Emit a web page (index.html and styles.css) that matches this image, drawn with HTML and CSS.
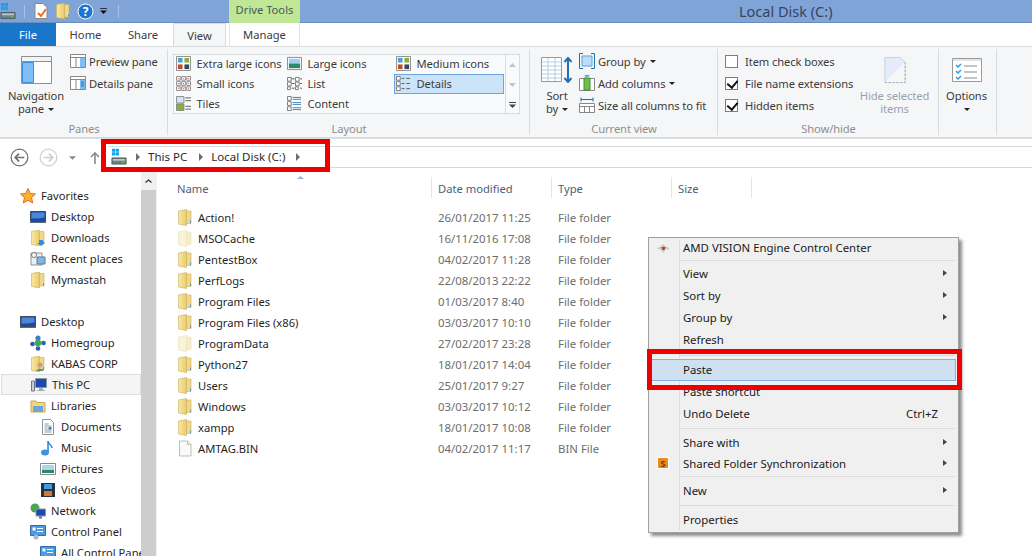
FILE: index.html
```html
<!DOCTYPE html>
<html lang="en">
<head>
<meta charset="utf-8">
<title>Local Disk (C:)</title>
<link rel="stylesheet" href="styles.css">
</head>
<body>
<svg class="defs" width="0" height="0">
  <defs>
    <linearGradient id="fg" x1="0" x2="1" y1="0" y2="0"><stop offset="0" stop-color="#f8e9a4"/><stop offset="1" stop-color="#e8cb6e"/></linearGradient>
    <symbol id="folder" viewBox="0 0 16 16">
      <path d="M1.500 1.500 9.500 0v16l-8-1.500z" fill="url(#fg)" stroke="#c9ad5c" stroke-width=".6"/>
      <path d="M9.500 1.500h4.500v12.500H9.500z" fill="#f0d888" stroke="#c9ad5c" stroke-width=".6"/>
      <path d="M13 11h1v2.500h-1z" fill="#4d9ad8"/>
    </symbol>
    <symbol id="folderlight" viewBox="0 0 16 16">
      <path d="M1.500 1.500 9.500 0v16l-8-1.500z" fill="#f9f3d8" stroke="#e8dfbc" stroke-width=".6"/>
      <path d="M9.500 1.500h4.500v12.500H9.500z" fill="#f5edcc" stroke="#e8dfbc" stroke-width=".6"/>
    </symbol>
    <symbol id="file" viewBox="0 0 16 16">
      <path d="M2.500.5h8l3.500 3.500v11.500H2.500z" fill="#fafafa" stroke="#bdbdbd"/>
      <path d="M10.500.5v3.500H14" fill="#eee" stroke="#bdbdbd"/>
    </symbol>
    <symbol id="monitor" viewBox="0 0 16 16">
      <path d="M.5 2.500h15v10H.5z" fill="#1c4aa3" stroke="#3d4b5e"/>
      <path d="M1.500 3.500h13v5c-5 1-9 1-13 1z" fill="#4d86d6"/>
      <path d="M0 13h16v1H0z" fill="#5b6b7d"/>
    </symbol>
    <symbol id="disk" viewBox="0 0 17 18">
      <path d="M1 0h3.500v3.500H1zM5 0h3.500v3.500H5zM1 4h3.500v3.500H1zM5 4h3.500v3.500H5z" fill="#10a5ea"/>
      <path d="M1 10h15v6.500H1z" fill="#6f7f86" stroke="#4a5a60"/>
      <path d="M2 11h13v2H2z" fill="#b9c6cb"/>
      <path d="M11.500 14h3v1.500h-3z" fill="#5ac04a"/>
    </symbol>
    <symbol id="cp" viewBox="0 0 16 16">
      <path d="M.5 1.500h15v10H.5z" fill="#4a9be0" stroke="#2d6da8"/>
      <path d="M2.500 3.500h3v3h-3z" fill="#fff"/>
      <path d="M7 4h6v1H7zM7 7h6v1H7z" fill="#fff"/>
      <circle cx="6" cy="13" r="2.500" fill="#b0b8bf"/>
    </symbol>
    <symbol id="thumbs" viewBox="0 0 16 16">
      <path d="M.5.500h15v15H.5z" fill="#fff" stroke="#8a8a8a"/>
      <path d="M2 2h5v5H2z" fill="#4f9fd0"/><path d="M9 2h5v5H9z" fill="#8cae3c"/>
      <path d="M2 9h5v5H2z" fill="#c8492a"/><path d="M9 9h5v5H9z" fill="#34495e"/>
    </symbol>
  </defs>
</svg>

<header class="titlebar">
  <div class="qat">
    <svg class="qi q1" viewBox="0 0 17 18"><use href="#disk"/></svg>
    <i class="qsep"></i>
    <svg class="qi q2" viewBox="0 0 14 16"><path d="M1 .5h8l4 4v11H1z" fill="#fff" stroke="#888"/><path d="m4 10 3 3 5-7" fill="none" stroke="#e2702a" stroke-width="2"/></svg>
    <svg class="qi q3" viewBox="0 0 16 16"><use href="#folder"/></svg>
    <svg class="qi q4" viewBox="0 0 17 17"><circle cx="8.500" cy="8.500" r="7.500" fill="#1a76d2" stroke="#fff"/><text x="8.500" y="13" class="qmark">?</text></svg>
    <svg class="qi q5" viewBox="0 0 8 7"><path d="M0 0h8v1H0zM0 3h8L4 7z" fill="#111"/></svg>
    <i class="qsep q6"></i>
  </div>
  <div class="ctx-tab">Drive Tools</div>
  <div class="wintitle">Local Disk (C:)</div>
</header>

<nav class="tabs">
  <span class="tab file">File</span>
  <span class="tab home">Home</span>
  <span class="tab share">Share</span>
  <span class="tab view">View</span>
  <span class="tab manage">Manage</span>
</nav>

<section class="ribbon">
  <div class="group g-panes">
    <div class="gbody panes">
      <div class="bigbtn nav">
        <svg class="bigicon" viewBox="0 0 31 28"><path d="M.5.500h30v27H.500z" fill="#fff" stroke="#8f8f8f"/><path d="M1 1h29v4H1z" fill="#f4f4f4"/><path d="M.5 5.500h30" stroke="#8f8f8f"/><path d="M1.500 6.500h11v20h-11z" fill="#7fbdf5" stroke="#3f8fdc"/></svg>
        <span class="biglabel">Navigation<br>pane <b class="caret"></b></span>
      </div>
      <div class="smallcol">
        <div class="sitem"><svg class="si" viewBox="0 0 16 16"><path d="M.5 1.500h15v13H.5z" fill="#fff" stroke="#888"/><path d="M.5 4.500h15M6 4.500v10" stroke="#888" fill="none"/><path d="M10 5h5v9h-5z" fill="#7fbdf5"/></svg>Preview pane</div>
        <div class="sitem"><svg class="si" viewBox="0 0 16 16"><path d="M.5 1.500h15v13H.5z" fill="#fff" stroke="#888"/><path d="M.5 4.500h15M6 4.500v10" stroke="#888" fill="none"/><path d="M10 5h5v9h-5z" fill="#7fbdf5"/><path d="M11 7h3M11 9h3M11 11h3" stroke="#2b6ca8"/></svg>Details pane</div>
      </div>
    </div>
    <div class="glabel">Panes</div>
  </div>

  <div class="group g-layout">
    <div class="gbody">
      <div class="gallery">
        <div class="gal-grid">
          <div class="gi"><svg class="gic" viewBox="0 0 16 16"><use href="#thumbs"/></svg>Extra large icons</div>
          <div class="gi"><svg class="gic" viewBox="0 0 16 16"><path d="M.5 1.500h15v13H.5z" fill="#fff" stroke="#888"/><path d="M2 3h12v5H2z" fill="#9fd0ee"/><path d="M2 8h12v5H2z" fill="#2e8a66"/></svg>Large icons</div>
          <div class="gi"><svg class="gic" viewBox="0 0 16 16"><use href="#thumbs"/></svg>Medium icons</div>
          <div class="gi"><svg class="gic" viewBox="0 0 16 16"><path d="M.5.500h4v4h-4zM6 .500h4v4H6zM11.500.500h4v4h-4zM.5 6h4v4h-4zM6 6h4v4H6zM11.500 6h4v4h-4zM.5 11.500h4v4h-4zM6 11.500h4v4H6zM11.500 11.500h4v4h-4z" fill="#fff" stroke="#8a8a8a"/><path d="M2 2h1v1H2zM7.500 2h1v1h-1zM13 2h1v1h-1zM2 7.500h1v1H2zM7.500 7.500h1v1h-1zM13 7.500h1v1h-1zM2 13h1v1H2zM7.500 13h1v1h-1zM13 13h1v1h-1z" fill="#c8492a"/></svg>Small icons</div>
          <div class="gi"><svg class="gic" viewBox="0 0 16 16"><path d="M.5 1.500h4v4h-4zM9 1.500h4v4H9zM.5 6.500h4v4h-4zM9 6.500h4v4H9zM.5 11.500h3v3h-3zM9 11.500h3v3H9z" fill="#fff" stroke="#777"/><path d="M5 3h3M14 3h2M5 8h3M14 8h2M5 13h3M14 13h2" stroke="#555"/></svg>List</div>
          <div class="gi sel"><svg class="gic" viewBox="0 0 16 16"><path d="M.5.500h4v4h-4zM.5 6h4v4h-4zM.5 11.500h4v4h-4z" fill="#fff" stroke="#777"/><path d="M6 2.500h3M11 2.500h4M6 8h3M11 8h4M6 13.500h3M11 13.500h4" stroke="#555"/></svg>Details</div>
          <div class="gi"><svg class="gic" viewBox="0 0 16 16"><path d="M.5.500h8v7h-8z" fill="#cfe6f5" stroke="#888"/><path d="M.5 8.500h8v7h-8z" fill="#8cae3c" stroke="#888"/><path d="M10 2h6M10 5h6M10 11h6M10 14h6" stroke="#555"/></svg>Tiles</div>
          <div class="gi"><svg class="gic" viewBox="0 0 16 16"><path d="M.5.500h4v4h-4zM.5 6h4v4h-4zM.5 11.500h4v4h-4z" fill="#fff" stroke="#777"/><path d="M6 1.500h9M6 3.500h9M6 7h9M6 9h9M6 12.500h9M6 14.500h9" stroke="#3f7fb8"/></svg>Content</div>
        </div>
        <div class="gal-scroll">
          <svg class="gs" viewBox="0 0 7 4"><path d="M3.500 0 7 4H0z" fill="#c4c4c4"/></svg>
          <svg class="gs" viewBox="0 0 7 4"><path d="M3.500 4 7 0H0z" fill="#c4c4c4"/></svg>
          <svg class="gs" viewBox="0 0 7 6"><path d="M0 0h7v1H0zM0 2.500h7L3.500 6z" fill="#444"/></svg>
        </div>
      </div>
    </div>
    <div class="glabel">Layout</div>
  </div>

  <div class="group g-view">
    <div class="gbody view-body">
      <div class="bigbtn sort">
        <svg class="sorticon" viewBox="0 0 32 26"><path d="M.5.500h20v24H.5z" fill="#fff" stroke="#999"/><path d="M1 5h19M1 9h19M1 13h19M1 17h19M1 21h19M7 1v23M14 1v23" stroke="#b5cfe6"/><path d="M27 1v24M23.500 5 27 1l3.500 4M23.500 21l3.500 4 3.500-4" fill="none" stroke="#1f6fb2" stroke-width="2"/></svg>
        <span class="biglabel">Sort<br>by <b class="caret"></b></span>
      </div>
      <div class="smallcol cv">
        <div class="sitem"><svg class="si" viewBox="0 0 16 16"><path d="M4 .5H.5v15H4M12 .5h3.500v15H12" fill="none" stroke="#1f6fb2"/><path d="M3 3h10v10H3z" fill="#bcdcf8" stroke="#5a9fdc"/></svg>Group by <b class="caret"></b></div>
        <div class="sitem"><svg class="si" viewBox="0 0 16 16"><path d="M.5 3.500h15v12H.5z" fill="#fff" stroke="#888"/><path d="M5 3h6v12H5z" fill="#6cc04a" stroke="#3e8e2a"/><path d="M5 0h6L8 3z" fill="#5aa6e6"/></svg>Add columns <b class="caret"></b></div>
        <div class="sitem"><svg class="si" viewBox="0 0 16 16"><path d="M.5 6.500h15v9H.5zM.5 9.500h15M5.500 9.500v6M10.500 9.500v6" fill="#fff" stroke="#888"/><path d="M2 2.500h12M2 .5v4M14 .5v4" fill="none" stroke="#1f6fb2"/></svg>Size all columns to fit</div>
      </div>
    </div>
    <div class="glabel">Current view</div>
  </div>

  <div class="group g-show">
    <div class="gbody show-body">
      <div class="smallcol checks">
        <div class="sitem"><i class="cb"></i>Item check boxes</div>
        <div class="sitem"><i class="cb on"></i>File name extensions</div>
        <div class="sitem"><i class="cb on"></i>Hidden items</div>
      </div>
      <div class="bigbtn hide">
        <svg class="hideicon" viewBox="0 0 22 28"><path d="M.5.500h16l5 5v21H.5z" fill="#e4ecfa" stroke="#c4d0e4"/><path d="M.5 26.500 21 5.500v21z" fill="#f5f6f7"/><path d="M21.500 5.500v21H.5" fill="none" stroke="#9aa5b5" stroke-dasharray="2 2"/></svg>
        <span class="biglabel dim">Hide selected<br>items</span>
      </div>
    </div>
    <div class="glabel">Show/hide</div>
  </div>

  <div class="group g-options">
    <div class="gbody">
      <div class="bigbtn opt">
        <svg class="opticon" viewBox="0 0 30 24"><path d="M.5.500h29v23H.5z" fill="#fff" stroke="#999"/><path d="M1 1h28v2H1z" fill="#e4e4e4"/><path d="m4 7 2 2 3-3M4 13l2 2 3-3M4 19l2 2 3-3" fill="none" stroke="#2e9be6" stroke-width="1.500"/><path d="M12 8h13M12 14h13M12 20h13" stroke="#888"/></svg>
        <span class="biglabel">Options<br><b class="caret"></b></span>
      </div>
    </div>
  </div>
</section>

<div class="addressbar">
  <div class="navbtns">
    <svg class="nb back" viewBox="0 0 20 20"><circle cx="10" cy="10" r="8.800" fill="#fff" stroke="#707070" stroke-width="1.300"/><path d="M15 10H6M9.500 6 5.500 10l4 4" fill="none" stroke="#707070" stroke-width="1.800"/></svg>
    <svg class="nb fwd" viewBox="0 0 20 20"><circle cx="10" cy="10" r="8.800" fill="#fff" stroke="#cfcfcf" stroke-width="1.300"/><path d="M5 10h9M10.500 6l4 4-4 4" fill="none" stroke="#cfcfcf" stroke-width="1.800"/></svg>
    <svg class="nd" viewBox="0 0 8 4"><path d="M0 0h8L4 4z" fill="#8a8a8a"/></svg>
    <svg class="up" viewBox="0 0 10 12"><path d="M5 12V1M1 5l4-4 4 4" fill="none" stroke="#8a8a8a" stroke-width="1.600"/></svg>
  </div>
  <div class="crumbs">
    <svg class="crumbdisk" viewBox="0 0 17 18"><use href="#disk"/></svg>
    <i class="chev c1"></i><span class="crumb">This PC</span>
    <i class="chev c2"></i><span class="crumb">Local Disk (C:)</span>
    <i class="chev c3"></i>
  </div>
</div>

<main class="content">
  <aside class="sidebar">
    <div class="navtree">
      <div class="nt l0"><svg class="ni" viewBox="0 0 16 16"><path d="M8 .5l2.300 5 5.200.5-4 3.500 1.200 5.500L8 12.300 3.300 15l1.200-5.500-4-3.500 5.200-.5z" fill="#fbb12a" stroke="#e46d1f"/></svg>Favorites</div>
      <div class="nt l1"><svg class="ni" viewBox="0 0 16 16"><use href="#monitor"/></svg>Desktop</div>
      <div class="nt l1"><svg class="ni" viewBox="0 0 16 16"><use href="#folder"/><path d="M9 10h4v3h2l-4 3-4-3h2z" fill="#2f8fe0"/></svg>Downloads</div>
      <div class="nt l1"><svg class="ni" viewBox="0 0 16 16"><path d="M1 2h11v12H1z" fill="#eceff2" stroke="#8a949c"/><path d="M7 6h8v7H7z" fill="#7fb8e8" stroke="#5a7a96"/><circle cx="4" cy="4" r="2.500" fill="#fff" stroke="#777"/></svg>Recent places</div>
      <div class="nt l1"><svg class="ni" viewBox="0 0 16 16"><use href="#folder"/></svg>Mymastah</div>
      <div class="nt spacer"></div>
      <div class="nt l0"><svg class="ni" viewBox="0 0 16 16"><use href="#monitor"/></svg>Desktop</div>
      <div class="nt l1"><svg class="ni" viewBox="0 0 16 16"><circle cx="2.500" cy="9" r="2.300" fill="#2a5fb0"/><circle cx="8" cy="3" r="2.600" fill="#3a7fd0"/><circle cx="13.500" cy="8" r="2.300" fill="#2a5fb0"/><circle cx="8" cy="13.500" r="2.300" fill="#2a5fb0"/><circle cx="8" cy="8" r="3.300" fill="#3fae49"/></svg>Homegroup</div>
      <div class="nt l1"><svg class="ni" viewBox="0 0 16 16"><use href="#folder"/><circle cx="10" cy="9" r="2.500" fill="#c6a07c"/><path d="M6.500 15c0-3 7-3 7 0z" fill="#5f8f6f"/></svg>KABAS CORP</div>
      <div class="nt l1 active"><svg class="ni" viewBox="0 0 16 16"><path d="M4.500 1.500h11v9h-11z" fill="#1e48b0" stroke="#8b97a3"/><path d="M8 11h4v2h2v1H6v-1h2z" fill="#a3adb6"/><path d="M.5 4h3v10h-3z" fill="#c8ced4" stroke="#6d7780"/></svg>This PC</div>
      <div class="nt l1"><svg class="ni" viewBox="0 0 16 16"><path d="M1 3h5l1 1.500h8V14H1z" fill="#f3d57f" stroke="#c9a94e"/><path d="M3 8h10v6H3z" fill="#6aa7dc"/></svg>Libraries</div>
      <div class="nt l2"><svg class="ni" viewBox="0 0 16 16"><path d="M2.500.5h8l3 3v12h-11z" fill="#fff" stroke="#8a949c"/><path d="M4.500 5h4M4.500 7h7M4.500 9h3M4.500 11h7M4.500 13h7" stroke="#8a9aa8"/><path d="M8.500 8h3v2.500h-3z" fill="#3a7fc0"/></svg>Documents</div>
      <div class="nt l2"><svg class="ni" viewBox="0 0 16 16"><path d="M8 1c0 4 4 3 4 7M8 1v11" fill="none" stroke="#2a82d8" stroke-width="1.500"/><ellipse cx="5" cy="12.500" rx="4" ry="3" fill="#3a95e4"/></svg>Music</div>
      <div class="nt l2"><svg class="ni" viewBox="0 0 16 16"><path d="M.5 2.500h15v11H.5z" fill="#fff" stroke="#888"/><path d="M2 4h12v5H2z" fill="#a8d6ee"/><path d="M2 9h12v3H2z" fill="#2e8a66"/></svg>Pictures</div>
      <div class="nt l2"><svg class="ni" viewBox="0 0 16 16"><path d="M1 1h14v14H1z" fill="#23343c"/><path d="M4 2h8v5H4z" fill="#3f9ce0"/><path d="M4 9h8v5H4z" fill="#d07a3a"/></svg>Videos</div>
      <div class="nt l1"><svg class="ni" viewBox="0 0 16 16"><circle cx="5" cy="5" r="4.500" fill="#48a84e"/><path d="M6 6h9.500v7H6z" fill="#1e48b0" stroke="#8b97a3"/><path d="M9 13.500h3v2H9z" fill="#3a6fc0"/></svg>Network</div>
      <div class="nt l1"><svg class="ni" viewBox="0 0 16 16"><use href="#cp"/></svg>Control Panel</div>
      <div class="nt l2"><svg class="ni" viewBox="0 0 16 16"><use href="#cp"/></svg>All Control Panel Items</div>
    </div>
    <div class="scrollbar"><div class="sb-up"><svg class="sb-arrow" viewBox="0 0 7 4"><path d="M.5 3.500l3-2.500 3 2.500" fill="none" stroke="#333" stroke-width="1.300"/></svg></div></div>
  </aside>

  <section class="files">
    <div class="fhead">
      <svg class="sortcaret" viewBox="0 0 7 3"><path d="M3.500 0 7 3H0z" fill="#9fb6cc"/></svg>
      <span class="h-name">Name</span><span class="h-date">Date modified</span><span class="h-type">Type</span><span class="h-size">Size</span>
    </div>
    <div class="frow"><span class="f-name"><svg class="fi"><use href="#folder"/></svg>Action!</span><span class="f-date">26/01/2017 11:25</span><span class="f-type">File folder</span></div>
    <div class="frow"><span class="f-name"><svg class="fi"><use href="#folderlight"/></svg>MSOCache</span><span class="f-date">16/11/2016 17:08</span><span class="f-type">File folder</span></div>
    <div class="frow"><span class="f-name"><svg class="fi"><use href="#folder"/></svg>PentestBox</span><span class="f-date">04/02/2017 11:28</span><span class="f-type">File folder</span></div>
    <div class="frow"><span class="f-name"><svg class="fi"><use href="#folder"/></svg>PerfLogs</span><span class="f-date">22/08/2013 22:22</span><span class="f-type">File folder</span></div>
    <div class="frow"><span class="f-name"><svg class="fi"><use href="#folder"/></svg>Program Files</span><span class="f-date">01/03/2017 8:40</span><span class="f-type">File folder</span></div>
    <div class="frow"><span class="f-name"><svg class="fi"><use href="#folder"/></svg>Program Files (x86)</span><span class="f-date">03/03/2017 10:10</span><span class="f-type">File folder</span></div>
    <div class="frow"><span class="f-name"><svg class="fi"><use href="#folderlight"/></svg>ProgramData</span><span class="f-date">27/02/2017 23:28</span><span class="f-type">File folder</span></div>
    <div class="frow"><span class="f-name"><svg class="fi"><use href="#folder"/></svg>Python27</span><span class="f-date">18/01/2017 14:04</span><span class="f-type">File folder</span></div>
    <div class="frow"><span class="f-name"><svg class="fi"><use href="#folder"/></svg>Users</span><span class="f-date">25/01/2017 9:27</span><span class="f-type">File folder</span></div>
    <div class="frow"><span class="f-name"><svg class="fi"><use href="#folder"/></svg>Windows</span><span class="f-date">03/03/2017 10:12</span><span class="f-type">File folder</span></div>
    <div class="frow"><span class="f-name"><svg class="fi"><use href="#folder"/></svg>xampp</span><span class="f-date">18/01/2017 10:08</span><span class="f-type">File folder</span></div>
    <div class="frow"><span class="f-name"><svg class="fi"><use href="#file"/></svg>AMTAG.BIN</span><span class="f-date">04/02/2017 11:17</span><span class="f-type">BIN File</span></div>
  </section>
</main>

<div class="ctxmenu">
  <div class="mi first"><svg class="mic" viewBox="0 0 13 9"><path d="M0 4.500 4 2l2.500-2L8 2l5 2.500L8 6 6.500 9 4 6z" fill="#c8c8c8"/><path d="M4.500 3h4L7.500 6h-2z" fill="#c8352a"/></svg>AMD VISION Engine Control Center</div>
  <div class="msep sep-a"></div>
  <div class="mi sub">View</div>
  <div class="mi sub">Sort by</div>
  <div class="mi sub">Group by</div>
  <div class="mi">Refresh</div>
  <div class="msep sep-b"></div>
  <div class="mi hl">Paste</div>
  <div class="mi">Paste shortcut</div>
  <div class="mi">Undo Delete<span class="sc">Ctrl+Z</span></div>
  <div class="msep sep-c"></div>
  <div class="mi sub tight">Share with</div>
  <div class="mi sub tight"><svg class="mic s" viewBox="0 0 12 12"><path d="M0 0h12v12H0z" fill="#fff"/><path d="M1 1h10v10H1z" fill="#ee8a1c"/><text x="6" y="9.500" class="smark">S</text></svg>Shared Folder Synchronization</div>
  <div class="msep sep-d"></div>
  <div class="mi sub tight">New</div>
  <div class="msep sep-e"></div>
  <div class="mi">Properties</div>
</div>

<div class="redbox rb-addr"></div>
<div class="redbox rb-paste"></div>
</body>
</html>
```

FILE: styles.css
```css
* { box-sizing: border-box; }
html, body { margin: 0; height: 556px; overflow: hidden; background: #fff; }
body { font-family: "Noto Sans", "Open Sans", sans-serif; font-size: 11.2px; color: #1f1f1f; position: relative; }
.defs { position: absolute; }
svg { display: block; flex: none; }

/* title bar */
.titlebar { height: 23px; background: #80a3d8; border-bottom: 1px solid #688cc0; display: flex; align-items: flex-start; }
.qat { width: 229px; height: 22px; display: flex; align-items: center; flex: none; }
.qi { flex: none; }
.q1 { width: 16px; height: 17px; }
.qsep { width: 1px; height: 13px; background: #9aa3ad; margin: 0 0 0 7px; flex: none; box-shadow: 1px 0 0 #a9c2e6; }
.q2 { width: 14px; height: 16px; margin-left: 10px; }
.q3 { width: 16px; height: 16px; margin-left: 7px; }
.q4 { width: 17px; height: 17px; margin-left: 6px; }
.q5 { width: 7px; height: 6px; margin-left: 6px; }
.q6 { margin-left: 10px; }
.qmark { font: 700 12px "Noto Sans", sans-serif; fill: #fff; text-anchor: middle; }
.ctx-tab { width: 71px; height: 23px; background: #bfe795; color: #48595a; text-align: center; line-height: 20px; flex: none; }
.wintitle { margin-left: 439px; font-size: 14.5px; line-height: 23px; color: #34465c; }

/* tabs */
.tabs { height: 23px; background: #fff; position: relative; display: flex; }
.tab { line-height: 23px; color: #3b3b3b; flex: none; text-align: center; }
.tab.file { width: 56px; background: #1a76c9; color: #fff; }
.tab.home { width: 59px; }
.tab.share { width: 56px; }
.tab.view { width: 53px; margin-left: 2px; background: #f5f6f7; border: 1px solid #dadbdc; border-bottom: 0; }
.tab.manage { width: 71px; margin-left: 3px; border-left: 1px solid #e3e3e3; border-right: 1px solid #e3e3e3; }

/* ribbon */
.ribbon { height: 93px; background: #f5f6f7; border-top: 1px solid #dadbdc; border-bottom: 2px solid #dadbdc; display: flex; color: #3b3b3b; letter-spacing: -.1px; }
.group { position: relative; flex: none; height: 90px; display: flex; flex-direction: column; }
.group::after { content: ""; position: absolute; right: 0; top: 2px; bottom: 2px; width: 1px; background: #dadbdc; }
.gbody { height: 73px; display: flex; }
.glabel { text-align: center; color: #8e8e8e; line-height: 14px; margin-top: 2px; }
.g-panes { width: 168px; }
.g-layout { width: 362px; }
.g-view { width: 188px; }
.g-show { width: 221px; }
.g-options { width: 58px; }

.bigbtn { display: flex; flex-direction: column; align-items: center; text-align: center; flex: none; }
.biglabel { line-height: 13px; display: block; }
.dim { color: #98a2ad; }
.caret { display: inline-block; border: 3px solid transparent; border-top: 3px solid #222; border-bottom: 0; vertical-align: 2px; margin-left: 1px; }
.nav { width: 72px; padding-top: 9px; }
.bigicon { width: 31px; height: 28px; margin-bottom: 5px; }
.smallcol { display: flex; flex-direction: column; }
.sitem { height: 22px; display: flex; align-items: center; gap: 3px; white-space: nowrap; }
.si { width: 16px; height: 16px; }
.panes .smallcol { padding-top: 3px; margin-left: -2px; }

.gallery { margin: 7px 0 0 5px; width: 347px; height: 60px; border: 1px solid #dadbdc; background: #f9fafb; display: flex; }
.gal-grid { display: grid; grid-template-columns: 111px 109px 110px; grid-auto-rows: 20px; width: 332px; margin-top: -1px; }
.gi { display: flex; align-items: center; gap: 5.500px; padding: 0 0 1px 1px; white-space: nowrap; border: 1px solid transparent; }
.gi.sel { background: #cce4f9; border-color: #6aa5e0; height: 20px; }
.gic { width: 15px; height: 15px; }
.gal-scroll { width: 14px; border-left: 1px solid #dadbdc; display: flex; flex-direction: column; align-items: center; }
.gs { width: 7px; height: 6px; margin: 7px 0 7px; }

.sort { width: 46px; padding: 10px 0 0 8px; }
.sorticon { width: 32px; height: 26px; margin-bottom: 6px; }
.cv { padding-top: 3px; margin-left: 3px; }

.show-body { padding: 3px 0 0 7px; }
.checks { width: 128px; }
.checks .sitem { gap: 7px; }
.cb { width: 13px; height: 13px; border: 1px solid #6d7d9c; background: #fff; display: block; position: relative; flex: none; }
.cb.on::after { content: ""; position: absolute; left: 3px; top: 0; width: 5px; height: 8px; border-right: 2px solid #111; border-bottom: 2px solid #111; transform: rotate(40deg); }
.hide { width: 79px; margin-left: 2px; padding-top: 7px; }
.hideicon { width: 22px; height: 27px; margin-bottom: 5px; }
.opt { width: 55px; padding-top: 11px; }
.opticon { width: 30px; height: 24px; margin-bottom: 7px; }

/* address */
.addressbar { height: 29px; display: flex; align-items: flex-end; background: #fff; }
.navbtns { width: 108px; height: 21px; display: flex; align-items: center; padding-left: 10px; flex: none; }
.nb { width: 19px; height: 19px; }
.fwd { margin-left: 10px; }
.nd { width: 7px; height: 4px; margin-left: 11px; }
.up { width: 10px; height: 12px; margin-left: 14px; }
.crumbs { flex: 1; height: 22px; border-top: 1px solid #d9d9d9; border-bottom: 1px solid #d9d9d9; display: flex; align-items: center; padding-left: 3px; }
.crumbdisk { width: 16px; height: 18px; }
.chev { width: 0; height: 0; border-left: 4px solid #6e6e6e; border-top: 4px solid transparent; border-bottom: 4px solid transparent; flex: none; }
.c1 { margin-left: 9px; }
.c2 { margin-left: 12px; }
.c3 { margin-left: 11px; }
.crumb { margin-left: 8px; color: #2a2a2a; font-size: 11.5px; line-height: 18px; padding-bottom: 1px; }

/* main */
.content { display: flex; height: 388px; overflow: hidden; }
.sidebar { width: 157px; flex: none; display: flex; border-right: 1px solid #f0f0f0; }
.navtree { width: 141px; overflow: hidden; padding-top: 17px; flex: none; }
.nt { height: 21px; display: flex; align-items: center; white-space: nowrap; gap: 5px; }
.l0 { padding-left: 20px; }
.l1 { padding-left: 30px; }
.l2 { padding-left: 40px; }
.nt.active { background: #f5f5f5; border: 1px solid #dedede; margin-left: 1px; padding-left: 29px; }
.ni { width: 16px; height: 16px; }
.scrollbar { width: 15px; background: #cdcdcd; flex: none; }
.sb-up { height: 18px; background: #f0f0f0; display: flex; align-items: center; justify-content: center; margin-top: 4px; }
.sb-arrow { width: 7px; height: 4px; }

.files { flex: 1; position: relative; }
.fhead { height: 39px; display: flex; padding: 9px 0 0 20px; position: relative; }
.fhead span { display: block; height: 21px; line-height: 24px; color: #4c607a; flex: none; border-right: 1px solid #e5e5e5; }
.h-name { width: 255px; }
.h-date { width: 120px; padding-left: 6px; }
.h-type { width: 120px; padding-left: 6px; }
.h-size { width: 80px; padding-left: 6px; }
.sortcaret { position: absolute; left: 140px; top: 8px; width: 7px; height: 3px; }
.frow { height: 21px; display: flex; align-items: center; white-space: nowrap; }
.f-name { width: 281px; padding-left: 20px; display: flex; align-items: center; gap: 5px; color: #1f1f1f; flex: none; }
.fi { width: 16px; height: 17px; }
.f-date { width: 120px; color: #6d6d6d; flex: none; font-size: 11.4px; }
.f-type { color: #6d6d6d; font-size: 11.4px; }

/* context menu */
.ctxmenu { position: absolute; left: 648px; top: 237px; width: 311px; height: 296px; background: #f0f0f0; border: 1px solid #a0a0a0; box-shadow: 3px 3px 3px #8e8e8e; color: #1a1a1a; padding-left: 34px; font-size: 11.4px; }
.ctxmenu::before { content: ""; position: absolute; left: 30px; top: 2px; bottom: 2px; width: 1px; background: #dcdcdc; }
.mi { height: 22px; line-height: 21px; position: relative; white-space: nowrap; }
.mi.first, .mi.tight { height: 21px; }
.mi.first { line-height: 19px; }
.sub::after { content: ""; position: absolute; right: 11px; top: 7px; border-left: 4px solid #444; border-top: 3.500px solid transparent; border-bottom: 3.500px solid transparent; }
.mic { position: absolute; left: -26px; top: 6px; width: 13px; height: 9px; }
.mic.s { width: 12px; height: 12px; top: 4px; }
.smark { font: 700 9px "Noto Sans", sans-serif; fill: #7a3a00; text-anchor: middle; }
.msep { height: 1px; background: #dcdcdc; position: relative; margin-left: -4px; margin-right: 3px; }
.sep-a { margin-top: 1px; margin-bottom: 2px; }
.sep-b { margin-top: 4px; margin-bottom: 3px; }
.sep-c { margin-top: 3px; margin-bottom: 3px; }
.sep-d { margin-top: 2px; margin-bottom: 3px; }
.sep-e { margin-top: 4px; margin-bottom: 3px; }
.hl { background: #cfe1f1; border: 1px solid #7fb2e5; margin-left: -33px; margin-right: 2px; padding-left: 32px; line-height: 19px; }
.sc { position: absolute; right: 20px; }

.redbox { position: absolute; border: 5px solid #ee0000; }
.rb-addr { left: 101px; top: 139px; width: 229px; height: 33px; }
.rb-paste { left: 647px; top: 349px; width: 315px; height: 41px; }
```
